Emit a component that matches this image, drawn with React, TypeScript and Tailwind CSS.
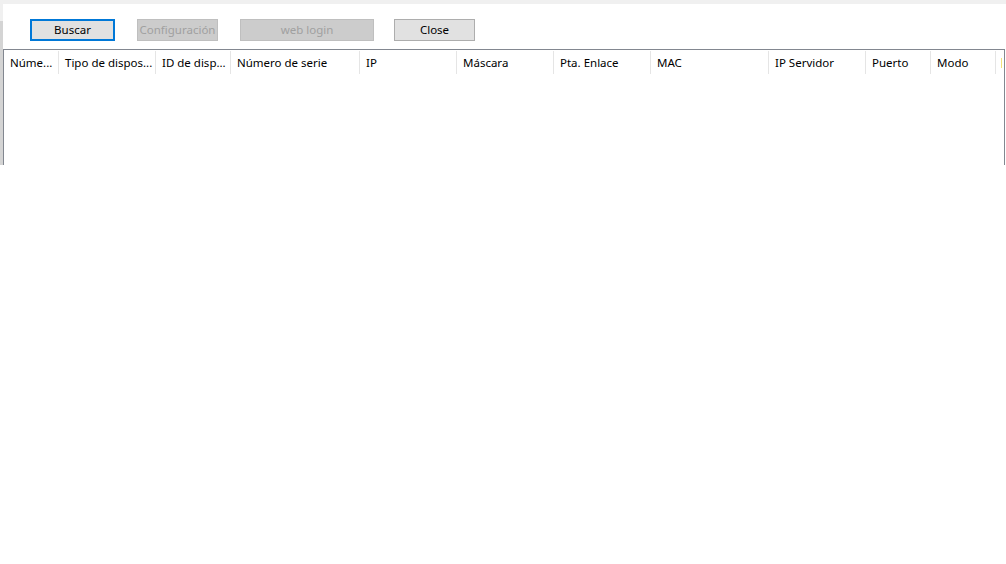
import React from 'react';

const columns: { label: string; width: number }[] = [
  { label: 'Núme...', width: 55 },
  { label: 'Tipo de dispos...', width: 97 },
  { label: 'ID de disp...', width: 75 },
  { label: 'Número de serie', width: 129 },
  { label: 'IP', width: 97 },
  { label: 'Máscara', width: 97 },
  { label: 'Pta. Enlace', width: 97 },
  { label: 'MAC', width: 118 },
  { label: 'IP Servidor', width: 97 },
  { label: 'Puerto', width: 65 },
  { label: 'Modo', width: 65 },
];

const App: React.FC = () => {
  return (
    <div
      className="w-[1006px] h-[564px] bg-white overflow-hidden text-[11.5px] text-black"
      style={{ fontFamily: '"Noto Sans", "Open Sans", sans-serif' }}
    >
      <div className="h-[4px] bg-[#f0f0f0]" />
      <div className="flex">
        {/* window edge */}
        <div className="w-[3px] flex flex-col">
          <div className="h-[17px] bg-[#f0f0f0]" />
          <div className="h-[144px] bg-[#d4d4d4]" />
        </div>

        <div className="flex flex-col">
          {/* toolbar */}
          <div className="flex items-start pt-[15px] pl-[27px]">
            <button className="w-[85px] h-[22px] bg-[#e1e1e1] border-2 border-[#0078d7] leading-none">
              Buscar
            </button>
            <button className="ml-[22px] w-[81px] h-[22px] bg-[#cccccc] border border-[#bfbfbf] text-[#a0a0a0] leading-none whitespace-nowrap">
              Configuración
            </button>
            <button className="ml-[22px] w-[134px] h-[22px] bg-[#cccccc] border border-[#bfbfbf] text-[#a0a0a0] leading-none">
              web login
            </button>
            <button className="ml-[20px] w-[81px] h-[22px] bg-[#e1e1e1] border border-[#adadad] leading-none">
              Close
            </button>
          </div>

          {/* device list */}
          <div className="mt-[8px] w-[1002px] h-[116px] border-l border-t border-r border-[#828790] bg-white">
            <div className="flex h-[25px] items-center">
              {columns.map((c) => (
                <div
                  key={c.label}
                  className="h-[23px] flex items-center pl-[6px] border-r border-[#e5e5e5] whitespace-nowrap overflow-hidden"
                  style={{ width: c.width }}
                >
                  {c.label}
                </div>
              ))}
              <div className="h-[23px] w-[8px] flex items-center pl-[5px]">
                <div className="w-[1px] h-[10px] bg-[#f3e27a]" />
              </div>
            </div>
          </div>
        </div>
      </div>
    </div>
  );
};

export default App;
